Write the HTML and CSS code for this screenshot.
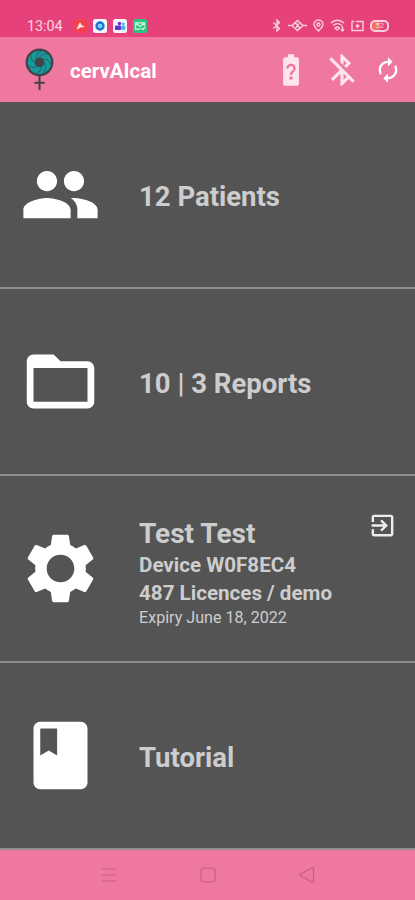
FILE: index.html
```html
<!DOCTYPE html>
<html lang="en">
<head>
  <meta charset="UTF-8">
  <meta name="viewport" content="width=device-width, initial-scale=1">
  <title>cervAIcal</title>
  <link rel="stylesheet" href="styles.css">
</head>
<body>
  <!-- Status bar -->
  <div class="status-bar">
    <span class="clock">13:04</span>
    <div class="notifications">
      <svg class="notif" viewBox="0 0 14 14">
        <rect width="14" height="14" rx="4" fill="#f4424f"/>
        <path d="M4 10l3-6 1.500 2.800L11 7.500 7.500 8z" fill="#fff" stroke="#fde0e0" stroke-linejoin="round"/>
      </svg>
      <svg class="notif" viewBox="0 0 14 14">
        <rect width="14" height="14" rx="2.5" fill="#f6f4fa"/>
        <circle cx="7" cy="7" r="3.4" fill="none" stroke="#1b78d0" stroke-width="2.6"/>
        <circle cx="7" cy="7" r="1.5" fill="#54c4ee"/>
      </svg>
      <svg class="notif" viewBox="0 0 14 14">
        <rect width="14" height="14" rx="2.5" fill="#f6f4fa"/>
        <circle cx="6.5" cy="4.6" r="1.8" fill="#6a35d5"/>
        <circle cx="10.3" cy="5" r="1.5" fill="#50bce8"/>
        <rect x="2" y="6.5" width="6" height="4.5" rx="1" fill="#5b35cc"/>
        <rect x="8" y="6.5" width="4.5" height="4.5" rx="1.5" fill="#55b6e8"/>
      </svg>
      <svg class="notif" viewBox="0 0 14 14">
        <rect width="14" height="14" rx="2.5" fill="#2bc47c"/>
        <path d="M11.5 7V3.8h-9v6.4h5M2.5 4L7 7.5 11.5 4M8.5 9l1.5 1.5L12.5 8" fill="none" stroke="#d8f8e6" stroke-width="1.2"/>
      </svg>
    </div>
    <div class="indicators">
      <svg width="10" height="13" viewBox="0 0 10 13"><path d="M1.5 3.5l6 6L5 12V1l2.500 2.500-6 6"/></svg>
      <svg width="19" height="13" viewBox="0 0 19 13"><path d="M4 6.500L9.500 1.500l5.500 5-5.500 5zM0 6.500h4M15 6.500h4M7.500 4l4 5M11 4.500L8 8.500"/></svg>
      <svg width="11" height="13" viewBox="0 0 11 13"><path d="M5.500 12C3 9.500 1 7.500 1 5.500a4.500 4.500 0 0 1 9 0C10 7.500 8 9.500 5.500 12z"/><circle cx="5.500" cy="5.500" r="1.500"/></svg>
      <svg width="15" height="13" viewBox="0 0 15 13"><path d="M1 4c4-3.500 9-3.500 13 0M3 6.500c3-2.500 6-2.500 9 0M5 9c2-1.500 3-1.500 4.500 0L7.300 11zM12.500 7v5M11 10.500l1.500 1.500L14 10.500"/></svg>
      <svg width="13" height="13" viewBox="0 0 13 13"><path d="M3.500 2.500H1v9h11v-9H5"/><path d="M6.500 5v4M4.500 7h4"/></svg>
      <div class="battery"><span>52</span></div>
    </div>
  </div>

  <!-- App bar -->
  <header class="app-bar">
    <svg class="logo" viewBox="0 0 28 42">
      <circle cx="14" cy="14" r="12.5" fill="#159a9b" stroke="#414448" stroke-width="2.2"/>
      <path d="M14 9c2-3 5-4 8-3M18 11c4 0 6 2 7 5M19 15c2 3 1 6-1 9M16 18c0 4-3 6-6 7M11 18c-3 2-6 1-8-1M9 14c-3-2-4-5-3-8M11 10c0-4 2-6 5-7" fill="none" stroke="#37616a"/>
      <circle cx="14" cy="14" r="4.8" fill="#414448"/>
      <path d="M14 27v14M9 34h10" fill="none" stroke="#414448" stroke-width="2"/>
    </svg>
    <h1>cervAIcal</h1>
    <div class="actions">
      <svg width="38" height="38" viewBox="0 0 24 24"><path d="M15.670 4H14V2h-4v2H8.330C7.600 4 7 4.600 7 5.330v15.330C7 21.400 7.600 22 8.330 22h7.330c.740 0 1.340-.600 1.340-1.330V5.330C17 4.600 16.400 4 15.670 4zm-2.720 13.950h-1.900v-1.900h1.900v1.900zm1.350-5.260s-.380.420-.670.710c-.480.480-.830 1.150-.830 1.600h-1.600c0-.830.460-1.520.930-2l.930-.940c.270-.270.440-.650.440-1.060 0-.830-.670-1.500-1.500-1.500s-1.500.670-1.500 1.500H9c0-1.660 1.340-3 3-3s3 1.340 3 3c0 .660-.270 1.260-.700 1.690z"/></svg>
      <svg width="38" height="38" viewBox="0 0 24 24"><path d="M13 5.830l1.880 1.880-1.600 1.600 1.410 1.410 3.020-3.020L12 2h-1v5.030l2 2v-3.200zM5.410 4L4 5.410 10.590 12 5 17.590 6.410 19 11 14.410V22h1l4.290-4.290 2.300 2.290L20 18.590 5.410 4zM13 18.170v-3.760l1.880 1.880L13 18.170z"/></svg>
      <svg width="28" height="28" viewBox="0 0 24 24"><path d="M12 6v3l4-4-4-4v3c-4.420 0-8 3.580-8 8 0 1.570.460 3.030 1.240 4.260L6.700 14.800c-.450-.830-.700-1.790-.700-2.800 0-3.310 2.690-6 6-6zm6.760 1.740L17.300 9.200c.440.840.700 1.790.700 2.800 0 3.310-2.690 6-6 6v-3l-4 4 4 4v-3c4.420 0 8-3.580 8-8 0-1.570-.460-3.030-1.240-4.260z"/></svg>
    </div>
  </header>

  <!-- Main menu -->
  <main class="menu">
    <div class="menu-item">
      <svg class="menu-icon" viewBox="0 0 24 24"><path d="M16 11c1.660 0 2.990-1.340 2.990-3S17.660 5 16 5s-3 1.340-3 3 1.340 3 3 3zm-8 0c1.660 0 2.990-1.340 2.990-3S9.660 5 8 5 5 6.340 5 8s1.340 3 3 3zm0 2c-2.330 0-7 1.170-7 3.500V19h14v-2.500c0-2.330-4.670-3.500-7-3.500zm8 0c-.290 0-.620.020-.970.050 1.160.840 1.970 1.970 1.970 3.450V19h6v-2.500c0-2.330-4.670-3.500-7-3.500z"/></svg>
      <h2>12 Patients</h2>
    </div>
    <div class="menu-item">
      <svg class="menu-icon" viewBox="0 0 24 24"><path d="M20 6h-8l-2-2H4c-1.100 0-1.990.900-1.990 2L2 18c0 1.100.900 2 2 2h16c1.100 0 2-.900 2-2V8c0-1.100-.900-2-2-2zm0 12H4V8h16v10z"/></svg>
      <h2>10 | 3 Reports</h2>
    </div>
    <div class="menu-item">
      <svg class="menu-icon" viewBox="0 0 24 24"><path d="M19.430 12.980c.040-.320.070-.640.070-.980s-.030-.660-.070-.980l2.110-1.650c.190-.150.240-.420.120-.640l-2-3.460c-.120-.220-.390-.300-.610-.220l-2.490 1c-.520-.400-1.080-.730-1.690-.980l-.380-2.650C14.460 2.180 14.250 2 14 2h-4c-.250 0-.460.180-.490.420l-.380 2.650c-.610.250-1.170.590-1.690.980l-2.490-1c-.230-.090-.490 0-.610.220l-2 3.460c-.130.220-.070.490.120.640l2.110 1.650c-.040.320-.070.650-.070.980s.030.660.070.980l-2.110 1.650c-.190.150-.240.420-.120.640l2 3.460c.120.220.390.300.610.220l2.490-1c.520.400 1.080.730 1.690.980l.380 2.650c.030.240.240.420.490.420h4c.250 0 .460-.180.490-.420l.380-2.650c.610-.250 1.170-.590 1.690-.980l2.490 1c.230.090.490 0 .610-.220l2-3.460c.120-.220.070-.490-.120-.640l-2.110-1.650zM12 16.100c-2.260 0-4.100-1.840-4.100-4.100s1.840-4.100 4.100-4.100 4.100 1.840 4.100 4.100-1.840 4.100-4.100 4.100z"/></svg>
      <div class="account">
        <h2>Test Test</h2>
        <h3>Device W0F8EC4</h3>
        <h3>487 Licences / demo</h3>
        <p>Expiry June 18, 2022</p>
      </div>
      <svg class="logout" viewBox="0 0 24 24"><path d="M10.090 15.590L11.500 17l5-5-5-5-1.410 1.410L12.670 11H3v2h9.670l-2.580 2.590zM19 3H5c-1.110 0-2 .900-2 2v4h2V5h14v14H5v-4H3v4c0 1.100.890 2 2 2h14c1.100 0 2-.900 2-2V5c0-1.100-.900-2-2-2z"/></svg>
    </div>
    <div class="menu-item">
      <svg class="menu-icon" viewBox="0 0 24 24"><path d="M18 2H6c-1.100 0-2 .900-2 2v16c0 1.100.900 2 2 2h12c1.100 0 2-.900 2-2V4c0-1.100-.900-2-2-2zM6 4h5v8l-2.500-1.500L6 12V4z"/></svg>
      <h2>Tutorial</h2>
    </div>
  </main>

  <!-- System navigation -->
  <nav class="nav-bar">
    <svg viewBox="0 0 16 16"><path d="M1 2h14M1 8h14M1 14h14"/></svg>
    <svg viewBox="0 0 16 16"><rect x="1" y="1" width="14" height="14" rx="3"/></svg>
    <svg viewBox="0 0 16 16"><path d="M1.500 7.200L13 .8q1.500-.5 1.500 1v12.400q0 1.500-1.500 1L1.500 8.800q-1-.8 0-1.600z"/></svg>
  </nav>
</body>
</html>
```

FILE: styles.css
```css
* {
  box-sizing: border-box;
}
body {
  margin: 0;
  height: 900px;
  display: flex;
  flex-direction: column;
  font-family: Roboto, sans-serif;
  background-color: #545454;
  color: #cdcdcd;
}
h1, h2, h3, p {
  margin: 0;
}
svg {
  flex: none;
}

/* Status bar */
.status-bar {
  height: 37px;
  padding: 14px 26px 0 27px;
  display: flex;
  align-items: center;
  background-color: #e6417a;
}
.clock {
  width: 46px;
  font-size: 14.300px;
  color: #fbd5e2;
}
.notifications {
  display: flex;
  gap: 6px;
}
.notif {
  width: 14px;
  height: 14px;
}
.indicators {
  margin-left: auto;
  display: flex;
  align-items: center;
  gap: 6px;
}
.indicators svg {
  fill: none;
  stroke: #fbcfdf;
  stroke-width: 1.4;
}
.battery {
  width: 19px;
  height: 12px;
  border: 2px solid #fbcfdf;
  border-radius: 5px;
  background: linear-gradient(to right, #f0705f 50%, transparent 50%);
  font-size: 8px;
  line-height: 8px;
  text-align: center;
  color: #fbcfdf;
}

/* App bar */
.app-bar {
  height: 65px;
  padding: 0 13px 0 25px;
  display: flex;
  align-items: center;
  background-color: #f077a0;
}
.logo {
  width: 29px;
  height: 43px;
}
.app-bar h1 {
  margin: 2px 0 0 16px;
  font-size: 20.5px;
  color: #fff;
}
.actions {
  margin-left: auto;
  display: flex;
  align-items: center;
  gap: 13px;
}
.actions svg {
  fill: #fde4ed;
}
.actions svg:last-child {
  fill: #fff;
}

/* Menu */
.menu {
  flex: 1;
  display: grid;
  grid-template-rows: repeat(4, 1fr);
}
.menu-item {
  padding: 0 18px 0 20px;
  display: flex;
  align-items: center;
  border-bottom: 2px solid #8e8e8e;
}
.menu-icon {
  width: 81px;
  height: 81px;
  margin-right: 38px;
  fill: #fff;
}
.menu-item h2 {
  padding-top: 5px;
  font-size: 27.5px;
  line-height: 34px;
}
.menu-item h3 {
  font-size: 20.6px;
  line-height: 28px;
}
.account {
  padding-top: 8px;
}
.account h2 {
  padding-top: 0;
  font-size: 28px;
}
.account p {
  font-size: 16.1px;
  line-height: 22px;
}
.logout {
  width: 29px;
  height: 29px;
  margin: 35px 0 0 auto;
  align-self: flex-start;
  fill: #eee;
}

/* Navigation bar */
.nav-bar {
  height: 50px;
  display: flex;
  justify-content: center;
  align-items: center;
  gap: 83px;
  background-color: #f077a0;
}
.nav-bar svg {
  width: 16px;
  height: 16px;
  fill: none;
  stroke: #c25f83;
  stroke-width: 1.2;
}
```
